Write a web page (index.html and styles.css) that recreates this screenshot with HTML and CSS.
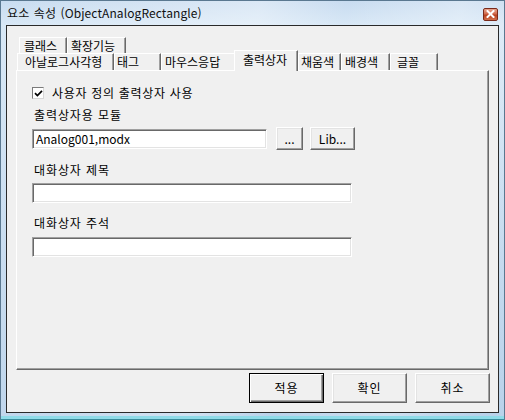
FILE: index.html
```html
<!DOCTYPE html>
<html lang="ko">
<head>
<meta charset="utf-8">
<title>요소 속성</title>
<link rel="stylesheet" href="styles.css">
</head>
<body>
<div class="window">
  <div class="titlebar">
    <span class="title">요소 속성 (ObjectAnalogRectangle)</span>
    <span class="close">
      <svg width="9" height="8" viewBox="0 0 9 8"><path d="M1.5 1 L7.5 7 M7.5 1 L1.5 7" stroke="#fff" stroke-width="2" stroke-linecap="square"/></svg>
    </span>
  </div>
  <div class="client">
    <div class="tabctl">
      <div class="tabrow row1">
        <div class="tab t-class">클래스</div>
        <div class="tab t-ext">확장기능</div>
      </div>
      <div class="tabrow row2">
        <div class="tab t-analog">아날로그사각형</div>
        <div class="tab t-tag">태그</div>
        <div class="tab t-mouse">마우스응답</div>
        <div class="tab active t-out">출력상자</div>
        <div class="tab t-fill">채움색</div>
        <div class="tab t-bg">배경색</div>
        <div class="tab t-font">글꼴</div>
      </div>
      <div class="panel">
        <label class="check-row">
          <span class="checkbox"><svg width="9" height="9" viewBox="0 0 9 9"><path d="M1 4.2 L3.4 6.6 L8 1.8" fill="none" stroke="#000" stroke-width="1.7"/></svg></span>
          <span class="check-text">사용자 정의 출력상자 사용</span>
        </label>
        <div class="label l-module">출력상자용 모듈</div>
        <div class="field-row">
          <div class="input short">Analog001,modx</div>
          <button class="btn b-dots">...</button>
          <button class="btn b-lib">Lib...</button>
        </div>
        <div class="label l-title">대화상자 제목</div>
        <div class="input long"></div>
        <div class="label l-note">대화상자 주석</div>
        <div class="input long i-note"></div>
      </div>
    </div>
    <div class="actions">
      <button class="btn big default">적용</button>
      <button class="btn big">확인</button>
      <button class="btn big">취소</button>
    </div>
  </div>
</div>
</body>
</html>
```

FILE: styles.css
```css
* { box-sizing: border-box; }
html, body { margin: 0; padding: 0; }
body {
  width: 505px;
  height: 420px;
  overflow: hidden;
  font-family: "Noto Sans CJK KR", "Noto Sans", sans-serif;
  font-size: 12px;
  color: #000;
  background: #fff;
}
.window {
  width: 505px;
  height: 420px;
  display: flex;
  flex-direction: column;
  border: 1px solid #5a7890;
  border-bottom-color: #3a8c9c;
  background:
    linear-gradient(100deg, rgba(255,255,255,0) 0%, rgba(255,255,255,0.35) 45%, rgba(255,255,255,0) 60%, rgba(255,255,255,0.3) 80%, rgba(255,255,255,0) 95%),
    linear-gradient(to bottom, #c8dcf0 0px, #d8e8f6 24px, #c6dbef 60%, #b9d2ea 100%);
  box-shadow: inset 0 -3px 0 #8fdbe8;
}
.titlebar {
  height: 24px;
  flex: none;
  display: flex;
  align-items: center;
  justify-content: space-between;
  padding: 0 6px 0 6px;
}
.title {
  font-size: 12px;
  line-height: 16px;
  color: #101010;
  letter-spacing: 0.1px;
  word-spacing: 1px;
}
.close {
  width: 15px;
  height: 13px;
  margin-top: 2px;
  border: 1px solid #7a2a1a;
  border-radius: 2px;
  background: linear-gradient(to bottom, #e9a58e 0%, #d06a4c 45%, #b8401f 55%, #d0704c 100%);
  display: flex;
  align-items: center;
  justify-content: center;
}
.close svg { display: block; }
.client {
  flex: 1;
  margin: 0 5px 6px 5px;
  border: 1px solid #2a2a2a;
  background: #f0f0f0;
  display: flex;
  flex-direction: column;
}
.tabctl {
  margin: 11px 9px 0 9px;
  display: flex;
  flex-direction: column;
}
.tabrow {
  display: flex;
  align-items: flex-end;
}
.row1 { height: 16px; padding-left: 3px; }
.row2 { height: 17px; padding-left: 1px; }
.tab {
  height: 100%;
  line-height: 16px;
  white-space: nowrap;
  border-top: 1px solid #fff;
  border-left: 1px solid #fff;
  border-right: 1px solid #696969;
  box-shadow: inset -1px 0 0 #a0a0a0;
  background: #f0f0f0;
  padding-left: 4px;
}
.tab.active {
  height: 21px;
  margin-bottom: -1px;
  position: relative;
  z-index: 2;
  line-height: 17px;
}
.t-class { width: 48px; padding-left: 4px; }
.t-ext { width: 59px; padding-left: 3px; }
.t-analog { width: 97px; padding-left: 7px; }
.t-tag { width: 47px; padding-left: 2px; }
.t-mouse { width: 75px; padding-left: 3px; }
.t-out { width: 64px; margin-left: -2px; padding-left: 8px; }
.t-fill { width: 43px; padding-left: 2px; }
.t-bg { width: 49px; padding-left: 3px; }
.t-font { width: 48px; padding-left: 6px; }
.panel {
  height: 300px;
  border-top: 1px solid #fff;
  border-left: 1px solid #fff;
  border-right: 1px solid #696969;
  border-bottom: 1px solid #696969;
  box-shadow: inset -1px -1px 0 #a0a0a0;
  padding-left: 15px;
  display: flex;
  flex-direction: column;
  align-items: flex-start;
}
.check-row {
  margin-top: 15px;
  height: 14px;
  display: flex;
  align-items: center;
}
.checkbox {
  width: 12px;
  height: 12px;
  border: 1px solid #7b7b7b;
  border-right-color: #d8d8d8;
  border-bottom-color: #d8d8d8;
  background: #fff;
  display: flex;
  align-items: center;
  justify-content: center;
}
.checkbox svg { display: block; }
.check-text {
  margin-left: 8px;
  line-height: 14px;
  letter-spacing: 0.7px;
}
.label {
  height: 14px;
  line-height: 14px;
  padding-left: 2px;
  letter-spacing: 0.9px;
}
.l-module { margin-top: 8px; }
.l-title { margin-top: 13px; }
.l-note { margin-top: 13px; }
.field-row {
  margin-top: 5px;
  display: flex;
  align-items: center;
}
.input {
  height: 20px;
  background: #fff;
  border-top: 1px solid #a0a0a0;
  border-left: 1px solid #a0a0a0;
  border-right: 1px solid #fff;
  border-bottom: 1px solid #fff;
  box-shadow: inset 1px 1px 0 #696969, inset -1px -1px 0 #e3e3e3;
  padding-left: 3px;
  line-height: 17px;
  font-size: 12px;
}
.input.short { width: 235px; }
.input.long { width: 320px; margin-top: 6px; }
.input.i-note { margin-top: 7px; }
.btn {
  font-family: "Noto Sans CJK KR", "Noto Sans", sans-serif;
  font-size: 12px;
  color: #000;
  background: #f0f0f0;
  border-top: 1px solid #fff;
  border-left: 1px solid #fff;
  border-right: 1px solid #696969;
  border-bottom: 1px solid #696969;
  box-shadow: inset -1px -1px 0 #a0a0a0, inset 1px 1px 0 #e3e3e3;
  padding: 0;
  margin: 0;
  height: 23px;
  line-height: 18px;
}
.b-dots { width: 27px; margin-left: 9px; }
.b-lib { width: 45px; margin-left: 7px; }
.actions {
  margin-top: 3px;
  margin-right: 8px;
  display: flex;
  justify-content: flex-end;
  gap: 8px;
}
.btn.big {
  width: 75px;
  height: 30px;
  line-height: 26px;
  letter-spacing: 1px;
}
.btn.default {
  border: 1px solid #000;
  box-shadow: inset 1px 1px 0 #fff, inset -1px -1px 0 #696969, inset -2px -2px 0 #a0a0a0;
}
```
